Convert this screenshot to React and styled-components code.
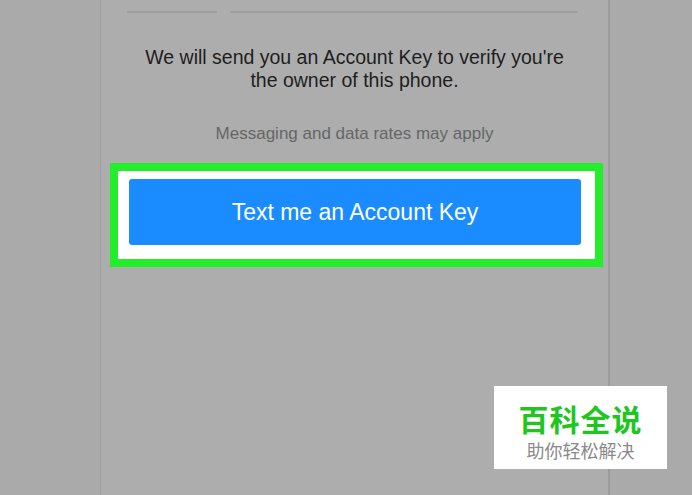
import styled, { createGlobalStyle } from "styled-components";

const GlobalStyle = createGlobalStyle`
    html, body {
        margin: 0;
        padding: 0;
        height: 100%;
        overflow: hidden;
        background: #aaaaaa;
        font-family: "Liberation Sans", Arial, sans-serif;
    }
    #root {
        height: 100%;
    }
`;

const App = () => {
    return (
        <>
            <GlobalStyle />
            <Page>
                <Card>
                    <InputRow>
                        <Underline $width="90px" />
                        <Underline $width="348px" />
                    </InputRow>

                    <Description>
                        We will send you an Account Key to verify you're
                        <br />
                        the owner of this phone.
                    </Description>

                    <Note>Messaging and data rates may apply</Note>

                    <Highlight>
                        <SendButton>Text me an Account Key</SendButton>
                    </Highlight>
                </Card>

                <Watermark>
                    <Brand>百科全说</Brand>
                    <Slogan>助你轻松解决</Slogan>
                </Watermark>
            </Page>
        </>
    );
};

const Page = styled.div`
    position: relative;
    height: 100%;
    display: flex;
    padding-left: 100px;
    box-sizing: border-box;
`;

const Card = styled.div`
    width: 507px;
    height: 100%;
    background: #adadad;
    border-left: 1px solid #a0a0a0;
    border-right: 2px solid #9b9b9b;
    display: flex;
    flex-direction: column;
    align-items: center;
`;

const InputRow = styled.div`
    display: flex;
    gap: 13px;
    margin-top: 11px;
    margin-left: -4px;
`;

const Underline = styled.div`
    width: ${(p) => p.$width};
    height: 2px;
    background: #9e9e9e;
`;

const Description = styled.p`
    margin: 33px 0 0;
    font-size: 19.5px;
    line-height: 23px;
    color: #1e1e1e;
    text-align: center;
`;

const Note = styled.p`
    margin: 32px 0 0;
    font-size: 17px;
    line-height: 20px;
    color: #666666;
    text-align: center;
`;

const Highlight = styled.div`
    box-sizing: border-box;
    margin: 19px 0 0 4px;
    width: 493px;
    border: 8px solid #22ee2a;
    background: #ffffff;
    padding: 8px 14px 14px 11px;
`;

const SendButton = styled.button`
    display: block;
    width: 100%;
    height: 66px;
    border: none;
    border-radius: 3px;
    background: #1a8cff;
    color: #ffffff;
    font-family: "Liberation Sans", Arial, sans-serif;
    font-size: 23px;
    cursor: pointer;
`;

const Watermark = styled.div`
    position: absolute;
    left: 494px;
    top: 386px;
    width: 173px;
    height: 83px;
    box-sizing: border-box;
    padding-top: 16px;
    background: #ffffff;
    display: flex;
    flex-direction: column;
    align-items: center;
`;

const Brand = styled.div`
    font-family: "Noto Sans CJK SC", sans-serif;
    font-size: 30px;
    font-weight: 700;
    line-height: 32px;
    color: #1fc61f;
    letter-spacing: 1px;
`;

const Slogan = styled.div`
    margin-top: 5px;
    font-family: "Noto Sans CJK SC", sans-serif;
    font-size: 18px;
    line-height: 22px;
    color: #8a8a8a;
`;

export default App;
